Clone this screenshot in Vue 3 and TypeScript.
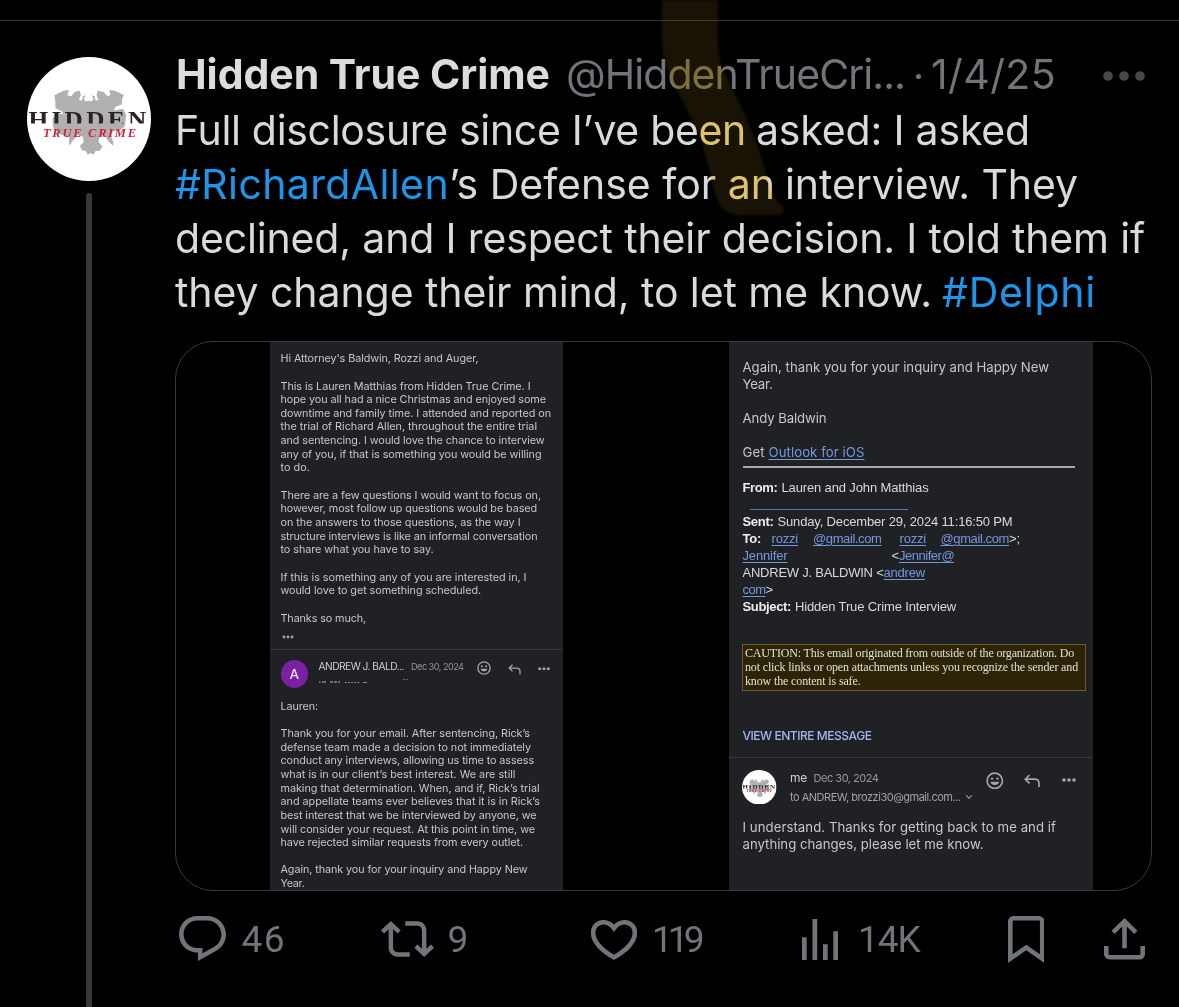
<script setup lang="ts">
type Line = [text: string, width: number]

// Spreads a run of text over the given width by adjusting its tracking.
const vFit = {
  mounted(el: HTMLElement, binding: { value: number }) {
    const count = (el.textContent ?? '').length
    if (!count || !binding.value) return
    const natural = el.getBoundingClientRect().width
    el.style.letterSpacing = `${(binding.value - natural) / count}px`
  },
}

const inquiry: Line[] = [
  ["Hi Attorney's Baldwin, Rozzi and Auger,", 198],
  ['', 0],
  ['This is Lauren Matthias from Hidden True Crime. I', 250],
  ['hope you all had a nice Christmas and enjoyed some', 265.5],
  ['downtime and family time. I attended and reported on', 270.5],
  ['the trial of Richard Allen, throughout the entire trial', 256.5],
  ['and sentencing. I would love the chance to interview', 264],
  ['any of you, if that is something you would be willing', 261],
  ['to do.', 29.5],
  ['', 0],
  ['There are a few questions I would want to focus on,', 260.5],
  ['however, most follow up questions would be based', 256.5],
  ['on the answers to those questions, as the way I', 240],
  ['structure interviews is like an informal conversation', 257],
  ['to share what you have to say.', 153],
  ['', 0],
  ['If this is something any of you are interested in, I', 246],
  ['would love to get something scheduled.', 200.5],
  ['', 0],
  ['Thanks so much,', 85.5],
]

const reply: Line[] = [
  ['Lauren:', 37.5],
  ['', 0],
  ['Thank you for your email. After sentencing, Rick’s', 249.5],
  ['defense team made a decision to not immediately', 250.5],
  ['conduct any interviews, allowing us time to assess', 253.5],
  ['what is in our client’s best interest. We are still', 235],
  ['making that determination. When, and if, Rick’s trial', 259],
  ['and appellate teams ever believes that it is in Rick’s', 259.5],
  ['best interest that we be interviewed by anyone, we', 256],
  ['will consider your request. At this point in time, we', 254.5],
  ['have rejected similar requests from every outlet.', 242.5],
  ['', 0],
  ['Again, thank you for your inquiry and Happy New', 247],
  ['Year.', 24],
]

const caution: Line[] = [
  ['CAUTION: This email originated from outside of the organization. Do', 329],
  ['not click links or open attachments unless you recognize the sender and', 333],
  ['know the content is safe.', 115.5],
]

const actions = [
  {
    name: 'reply', count: '46', width: 44.5, gap: 16, w: 47, h: 45, top: 0, box: '1.75 2 20.5 19.7',
    d: 'M1.751 10c0-4.42 3.584-8 8.005-8h4.366c4.49 0 8.129 3.64 8.129 8.13 0 2.96-1.607 5.68-4.196 7.11l-8.054 4.46v-3.69h-.067c-4.49.1-8.183-3.51-8.183-8.01zm8.005-6c-3.317 0-6.005 2.69-6.005 6 0 3.37 2.77 6.08 6.138 6.01l.351-.01h1.761v2.3l5.087-2.81c1.951-1.08 3.163-3.13 3.163-5.36 0-3.39-2.744-6.13-6.129-6.13H9.756z',
  },
  {
    name: 'repost', count: '9', width: 21, gap: 13.5, w: 53, h: 36, top: 5, box: '0.07 3.88 23.86 16.24',
    d: 'M4.5 3.88l4.432 4.14-1.364 1.46L5.5 7.55V16c0 1.1.896 2 2 2H13v2H7.5c-2.209 0-4-1.79-4-4V7.55L1.432 9.48.068 8.02 4.5 3.88zM16.5 6H11V4h5.5c2.209 0 4 1.79 4 4v8.45l2.068-1.93 1.364 1.46-4.432 4.14-4.432-4.14 1.364-1.46 2.068 1.93V8c0-1.1-.896-2-2-2z',
  },
  {
    name: 'like', count: '119', width: 47.5, gap: 15, w: 46, h: 40, top: 4, box: '2.1 3.5 19.8 17.66',
    d: 'M16.697 5.5c-1.222-.06-2.679.51-3.89 2.16l-.805 1.09-.806-1.09C9.984 6.01 8.526 5.44 7.304 5.5c-1.243.07-2.349.78-2.91 1.91-.552 1.12-.633 2.78.479 4.82 1.074 1.97 3.257 4.27 7.129 6.61 3.87-2.34 6.052-4.64 7.126-6.61 1.111-2.04 1.03-3.7.477-4.82-.561-1.13-1.666-1.84-2.908-1.91zm4.187 7.69c-1.351 2.48-4.001 5.12-8.379 7.67l-.503.3-.504-.3c-4.379-2.55-7.029-5.19-8.382-7.67-1.36-2.5-1.41-4.86-.514-6.67.887-1.79 2.647-2.91 4.601-3.01 1.651-.09 3.368.56 4.798 2.01 1.429-1.45 3.146-2.1 4.796-2.01 1.954.1 3.714 1.22 4.601 3.01.896 1.81.846 4.17-.514 6.67z',
  },
  {
    name: 'views', count: '14K', width: 61.5, gap: 20.5, w: 36, h: 41.5, top: 2.5, box: '0 0 36 42',
    d: 'M0 18.5h4.7V42H0zM10.5 0h4.7v42h-4.7zM21 25.5h4.7V42H21zM31.3 12.5H36V42h-4.7z',
  },
  {
    name: 'bookmark', count: '', width: 0, gap: 0, w: 36.5, h: 47, top: 0, box: '4 2 16 20.94',
    d: 'M4 4.5C4 3.12 5.119 2 6.5 2h11C18.881 2 20 3.12 20 4.5v18.44l-8-5.71-8 5.71V4.5zM6.5 4c-.276 0-.5.22-.5.5v14.56l6-4.29 6 4.29V4.5c0-.28-.224-.5-.5-.5h-11z',
  },
  {
    name: 'share', count: '', width: 0, gap: 0, w: 41, h: 41.5, top: 2, box: '3 2.59 18 18.41',
    d: 'M12 2.59l5.7 5.7-1.41 1.42L13 6.41V16h-2V6.41l-3.3 3.3-1.41-1.42L12 2.59zM21 15l-.02 3.51c0 1.38-1.12 2.49-2.5 2.49H5.5C4.11 21 3 19.88 3 18.5V15h2v3.5c0 .28.22.5.5.5h12.98c.28 0 .5-.22.5-.5L19 15h2z',
  },
]
</script>

<template>
  <main class="page">
    <article class="tweet">
      <aside class="rail">
        <svg class="avatar" viewBox="0 0 124 124">
          <defs>
            <clipPath id="cut"><rect x="0" y="50" width="124" height="16.5" /></clipPath>
          </defs>
          <symbol id="logo" viewBox="0 0 124 124">
            <circle cx="62" cy="62" r="62" fill="#fff" />
            <path
              fill="#b0b0b0"
              transform="translate(0 3.2) scale(.98 .9)"
              d="M28 39l9-5 6-1-2 6 4 1 4-5 5-1 1 5-2 5 3 1 1-5 3-1-2 4 2 3 3-1 3 1 2-3-2-4 3 1 1 5 3-1-2-5 1-5 6 1 4 5 3-1-1-6 6 1 9 5-2 4 0 6-7 3-1 4 9-2 3 7-1 12-5 5-7 1-3 5 3 6 0 5-5-5-4-7-5 2-1 6 4 5-3 5-4 0-2 4-3-2-3 2-2-4-4-1-2-5 4-4-1-6-5-2-5 6-4 6 0-9-3-2-8-2-5-6-1-10 3-7 8 1-1-3-7-4 0-6z"
            />
            <g clip-path="url(#cut)">
              <text x="1.5" y="70" textLength="121" lengthAdjust="spacingAndGlyphs" letter-spacing="3" font-family="Liberation Serif, serif" font-weight="bold" font-size="23" fill="#2c2226">HIDDEN</text>
            </g>
            <text x="16" y="79.5" textLength="93" font-family="Liberation Serif, serif" font-weight="bold" font-style="italic" font-size="12.5" fill="#d3203a">TRUE CRIME</text>
          </symbol>
          <use href="#logo" width="124" height="124" />
        </svg>
        <div class="thread"></div>
      </aside>

      <section class="content">
        <header class="head">
          <span v-fit="374" class="name">Hidden True Crime</span>
          <span v-fit="339" class="handle">@HiddenTrueCri...</span>
          <span class="middot"></span>
          <span v-fit="125" class="date">1/4/25</span>
          <svg class="more" viewBox="0 0 42 10"><circle cx="5" cy="5" r="4.8" /><circle cx="21" cy="5" r="4.8" /><circle cx="37" cy="5" r="4.8" /></svg>
        </header>

        <div class="body">
          <p><span v-fit="571">Full disclosure since I’ve been</span><span class="sp"></span><span v-fit="274">asked: I asked</span></p>
          <p><a v-fit="274">#RichardAllen</a><span v-fit="326">’s Defense for an</span><span class="sp"></span><span v-fit="293">interview. They</span></p>
          <p><span v-fit="970">declined, and I respect their decision. I told them if</span></p>
          <p><span v-fit="757">they change their mind, to let me know.</span><span class="sp"></span><a v-fit="154">#Delphi</a></p>
        </div>

        <div class="media">
          <div class="mail left">
            <div class="copy first">
              <div v-for="(l, i) in inquiry" :key="i" class="row"><span v-fit="l[1]">{{ l[0] }}</span></div>
            </div>
            <svg class="dots" viewBox="0 0 12 4"><circle cx="2" cy="2" r="1.4" /><circle cx="6" cy="2" r="1.4" /><circle cx="10" cy="2" r="1.4" /></svg>
            <div class="sender">
              <div class="initial">A</div>
              <div class="who">
                <div class="line"><span v-fit="85.5" class="from">ANDREW J. BALD...</span><span v-fit="52.5" class="when">Dec 30, 2024</span></div>
                <svg class="scrap" width="92" height="6" viewBox="0 0 92 6" fill="none" stroke="#85868a">
                  <path d="M0 4h1.5M3 4h4M11 4h3M15 4h3M19 4h2" stroke-width="1.5" />
                  <path d="M26 4.5h2M29 4.5h2M32 4.5h2M35 4.5h2M38.5 4.5h2M44 4.5h4M84 1.5h1.5M87 1.5h1.5" stroke-width="1" />
                </svg>
              </div>
              <svg class="smile" viewBox="0 0 18 18"><circle cx="9" cy="9" r="7.9" fill="none" stroke="currentColor" stroke-width="1.7" /><circle cx="6.2" cy="6.8" r="1.25" /><circle cx="11.8" cy="6.8" r="1.25" /><path d="M4.5 10h9a4.7 4.7 0 0 1-9 0z" /></svg>
              <svg class="back" viewBox="0 0 16 14"><path d="M5.5 1L1.2 5.2l4.3 4.2M1.2 5.2h9.3c3 0 4.5 1.8 4.5 4.3V13" /></svg>
              <svg class="kebab" viewBox="0 0 14 4"><circle cx="2" cy="2" r="1.8" /><circle cx="7" cy="2" r="1.8" /><circle cx="12" cy="2" r="1.8" /></svg>
            </div>
            <div class="copy">
              <div v-for="(l, i) in reply" :key="i" class="row"><span v-fit="l[1]">{{ l[0] }}</span></div>
            </div>
          </div>

          <div class="mail right">
            <div class="copy big">
              <div class="row"><span v-fit="306.5">Again, thank you for your inquiry and Happy New</span></div>
              <div class="row"><span v-fit="30">Year.</span></div>
              <div class="row"></div>
              <div class="row"><span v-fit="84">Andy Baldwin</span></div>
              <div class="row"></div>
              <div class="row get"><span v-fit="22">Get</span><a v-fit="96">Outlook for iOS</a></div>
            </div>
            <hr />
            <div class="meta">
              <div class="row"><b v-fit="35">From:</b><span v-fit="147" class="val">Lauren and John Matthias</span></div>
              <div class="row redacted"><i></i></div>
              <div class="row"><b v-fit="31">Sent:</b><span v-fit="235" class="val">Sunday, December 29, 2024 11:16:50 PM</span></div>
              <div class="row"><b v-fit="18.5">To:</b><a v-fit="26.5" class="t1">rozzi</a><a v-fit="68.5" class="t2">@gmail.com</a><a v-fit="26.5" class="t3">rozzi</a><a v-fit="68.5" class="t4">@gmail.com</a><span>&gt;;</span></div>
              <div class="row"><a v-fit="45">Jennifer</a><span class="jen">&lt;</span><a v-fit="55">Jennifer@</a></div>
              <div class="row"><span v-fit="141">ANDREW J. BALDWIN &lt;</span><a v-fit="41.5">andrew</a></div>
              <div class="row"><a v-fit="23">com</a><span>&gt;</span></div>
              <div class="row"><b v-fit="48.5">Subject:</b><span v-fit="161" class="val">Hidden True Crime Interview</span></div>
            </div>
            <div class="caution">
              <div v-for="(l, i) in caution" :key="i"><span v-fit="l[1]">{{ l[0] }}</span></div>
            </div>
            <div class="entire"><span v-fit="129">VIEW ENTIRE MESSAGE</span></div>
            <div class="sender">
              <svg class="mini" viewBox="0 0 124 124"><use href="#logo" width="124" height="124" /></svg>
              <div class="who">
                <div class="line"><span v-fit="17" class="from">me</span><span v-fit="65" class="when">Dec 30, 2024</span></div>
                <div class="to"><span v-fit="170.5">to ANDREW, brozzi30@gmail.com...</span><svg viewBox="0 0 8 6"><path d="M1.2 1.3L4 4.2l2.8-2.9" /></svg></div>
              </div>
              <svg class="smile" viewBox="0 0 18 18"><circle cx="9" cy="9" r="7.9" fill="none" stroke="currentColor" stroke-width="1.7" /><circle cx="6.2" cy="6.8" r="1.25" /><circle cx="11.8" cy="6.8" r="1.25" /><path d="M4.5 10h9a4.7 4.7 0 0 1-9 0z" /></svg>
              <svg class="back" viewBox="0 0 16 14"><path d="M5.5 1L1.2 5.2l4.3 4.2M1.2 5.2h9.3c3 0 4.5 1.8 4.5 4.3V13" /></svg>
              <svg class="kebab" viewBox="0 0 14 4"><circle cx="2" cy="2" r="1.8" /><circle cx="7" cy="2" r="1.8" /><circle cx="12" cy="2" r="1.8" /></svg>
            </div>
            <div class="copy big last">
              <div class="row"><span v-fit="313.5">I understand. Thanks for getting back to me and if</span></div>
              <div class="row"><span v-fit="241">anything changes, please let me know.</span></div>
            </div>
          </div>
        </div>

        <footer class="actions">
          <div v-for="a in actions" :key="a.name" class="action">
            <svg :viewBox="a.box" :width="a.w" :height="a.h" :style="{ marginTop: a.top + 'px' }" preserveAspectRatio="none"><path :d="a.d" /></svg>
            <span v-if="a.count" v-fit="a.width" :style="{ marginLeft: a.gap + 'px' }">{{ a.count }}</span>
          </div>
        </footer>
      </section>
    </article>

    <!-- translucent marker stroke over the heading -->
    <svg class="marker tint" width="140" height="230" viewBox="655 0 140 230"><path d="M662 0H718V45Q719 65 727 78L738 100Q755 135 763 163L771 190Q776 202 784 208Q784 214 777 215H737Q721 213 716 196L701 138L681 98Q662 66 662 40Z" /></svg>
    <svg class="marker glow" width="140" height="230" viewBox="655 0 140 230"><path d="M662 0H718V45Q719 65 727 78L738 100Q755 135 763 163L771 190Q776 202 784 208Q784 214 777 215H737Q721 213 716 196L701 138L681 98Q662 66 662 40Z" /></svg>
  </main>
</template>

<style>
body { background: #000; }
</style>

<style scoped>
.page { position: relative; width: 1179px; height: 1007px; overflow: hidden; background: #000; color: #dadada; font-family: Inter, sans-serif; isolation: isolate; }
.tweet { display: flex; margin-top: 20px; height: 986px; border-top: 1px solid #333436; }
svg { display: block; flex: none; }
span, a, b { display: inline-block; white-space: pre; }
a { color: #1d96e9; }
.rail { width: 175px; flex: none; display: flex; flex-direction: column; padding: 36px 0 0 27px; box-sizing: border-box; }
.avatar { width: 124px; height: 124px; }
.thread { width: 6px; flex: 1; margin: 12px 0 0 59px; background: #36383b; border-radius: 3px 3px 0 0; }
.content { flex: none; width: 977px; }
.head { display: flex; height: 56px; margin-top: 26px; font-size: 41px; line-height: 54px; color: #71757a; }
.name { font-weight: 700; color: #dcdcdc; margin-left: 1px; }
.handle { margin-left: 16px; }
.middot { width: 5px; height: 5px; border-radius: 50%; background: #71757a; margin: 27px 0 0 11px; }
.date { margin-left: 10px; }
.more { width: 42px; height: 10px; margin: 24px 0 0 46.5px; fill: #46484b; }
.body { font-size: 41px; line-height: 54px; height: 238px; }
.body p { display: flex; margin: 0; height: 54px; }
.sp { width: 10px; }
.media { display: flex; width: 975px; height: 548px; border: 1px solid #38393b; border-radius: 38px; overflow: hidden; }
.mail { background: #202125; color: #c6c7ca; overflow: hidden; flex: none; box-sizing: border-box; }
.left { width: 293px; margin-left: 94px; font-size: 10.8px; }
.right { width: 364px; margin-left: 166px; }
.copy { padding-left: 10.5px; }
.copy .row { height: 13.67px; line-height: 13.67px; }
.first { padding-top: 10.2px; }
.dots { width: 12px; height: 4px; margin: 9.3px 0 0 11.5px; fill: #a5a6a9; }
.sender { display: flex; border-top: 1px solid #36373b; color: #a5a6aa; }
.left .sender { height: 49.5px; margin-top: 10.5px; padding-left: 10.5px; }
.initial { width: 27.5px; height: 27.5px; line-height: 28px; border-radius: 50%; background: #7a20a2; color: #e8e0ee; text-align: center; font-size: 13.5px; font-weight: 500; margin-top: 10px; }
.left .who { width: 154px; margin: 8.5px 0 0 10.5px; }
.line { display: flex; align-items: baseline; }
.left .from { font-size: 10.2px; line-height: 14px; color: #cdced1; }
.left .when { font-size: 9.2px; margin-left: 7px; color: #929398; }
.scrap { margin-top: 5px; }
.smile, .kebab { fill: currentColor; }
.back { fill: none; stroke: currentColor; stroke-width: 1.7; }
.left .smile { width: 14px; height: 14px; margin: 11px 0 0 4px; }
.left .back { width: 13px; height: 11px; margin: 13.5px 0 0 17px; }
.left .kebab { width: 12px; height: 3.5px; margin: 16.5px 0 0 17px; }
.big { padding: 16.6px 0 0 13.5px; font-size: 13.2px; }
.copy.big .row, .meta .row { height: 17px; line-height: 17px; }
.get { display: flex; }
.mail a { color: #7397dc; text-decoration: underline; text-underline-offset: 1.5px; text-decoration-thickness: 1px; }
.get a { margin-left: 4px; }
hr { width: 332px; height: 1.5px; border: 0; margin: 5.9px 0 0 13.5px; background: #a9aaad; }
.meta { padding: 11px 0 0 13.5px; font-family: "Liberation Sans", sans-serif; font-size: 13px; color: #d8d9db; }
.meta .row { display: flex; }
.meta b { color: #ededee; }
.val { margin-left: 4px; }
.redacted i { width: 158px; height: 1.4px; background: #5578b8; margin: 13px 0 0 7.5px; }
.t1 { margin-left: 10.5px; } .t2 { margin-left: 15px; } .t3 { margin-left: 18px; } .t4 { margin-left: 14.5px; }
.jen { margin-left: 104px; }
.caution { width: 344px; height: 47px; box-sizing: border-box; margin: 29px 0 0 13px; border: 1.5px solid #76572b; background: #2c2406; color: #e2dfd4; padding: 2.5px 0 0 2px; font-family: "Liberation Serif", serif; font-size: 12px; line-height: 13.67px; }
.caution div { height: 13.67px; }
.entire { margin: 36px 0 0 13.5px; height: 17px; line-height: 17px; font-size: 12px; font-weight: 500; color: #a0b8ee; }
.right .sender { height: 61px; margin-top: 13px; padding-left: 13px; }
.mini { width: 34.5px; height: 34.5px; margin-top: 12px; }
.right .who { width: 186px; margin: 11px 0 0 13.5px; }
.right .from { font-size: 12px; line-height: 17px; color: #cfd0d3; }
.right .when { font-size: 11px; margin-left: 6.5px; color: #97989d; }
.to { display: flex; font-size: 11px; line-height: 16px; margin-top: 3px; color: #a0a1a5; }
.to svg { width: 8px; height: 6px; margin: 5.5px 0 0 4px; fill: none; stroke: #97989d; stroke-width: 1.2; }
.right .smile { width: 17.5px; height: 17.5px; margin: 14px 0 0 10px; }
.right .back { width: 16px; height: 14px; margin: 16px 0 0 20.5px; }
.right .kebab { width: 14px; height: 4px; margin: 20.5px 0 0 22px; }
.copy.last { padding-top: 0; }
.actions { display: grid; grid-template-columns: 202.5px 210px 210.5px 206px 96px 50px; margin: 25px -40px 0 3.5px; color: #71757a; fill: #71757a; }
.action { display: flex; align-items: flex-start; height: 48px; }
.action span { font-family: Roboto, sans-serif; font-size: 37px; line-height: 48px; }
.marker { position: absolute; left: 655px; top: 0; filter: blur(1px); }
.tint { fill: #fedf78; mix-blend-mode: multiply; }
.glow { fill: #191305; mix-blend-mode: screen; }
</style>
